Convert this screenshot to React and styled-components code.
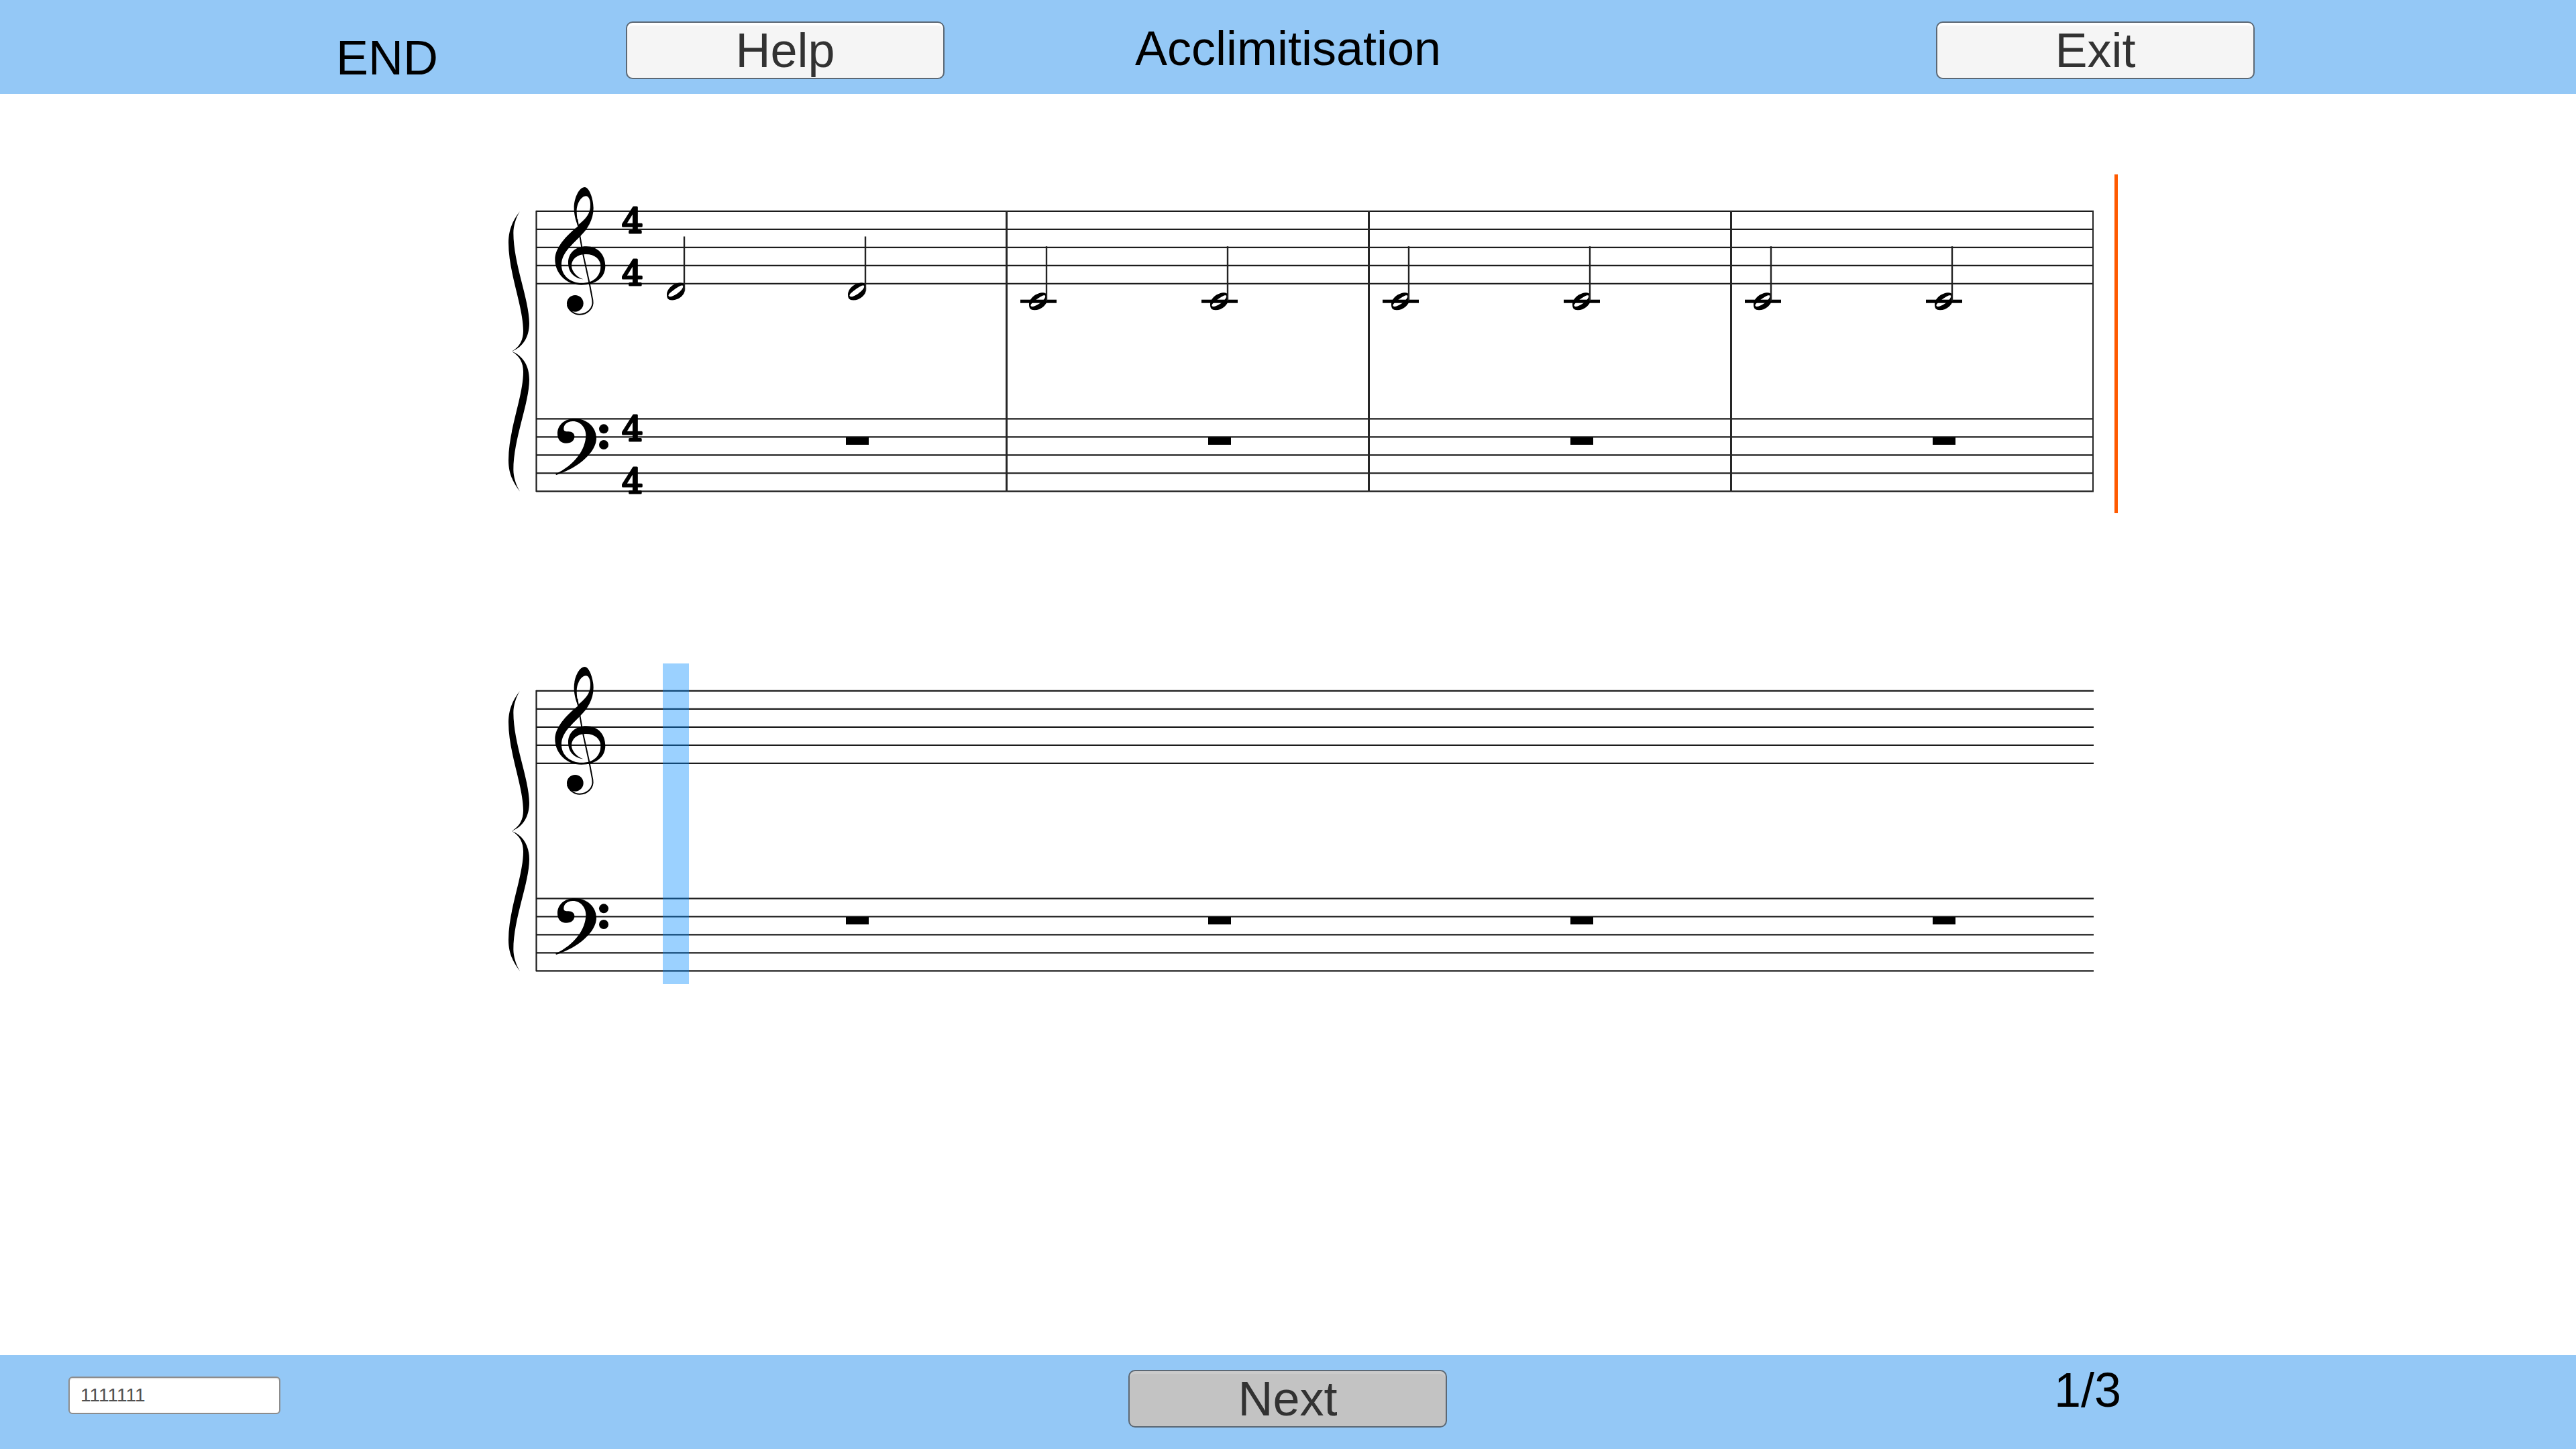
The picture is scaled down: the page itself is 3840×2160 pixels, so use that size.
import React from "react";
import styled, { createGlobalStyle } from "styled-components";

const GlobalStyle = createGlobalStyle`
  *, *::before, *::after { box-sizing: border-box; }
  body {
    margin: 0;
    background: #fff;
    color: #000;
    font-family: "Liberation Sans", Arial, sans-serif;
  }
`;

const Page = styled.div`
  min-height: 100vh;
  display: flex;
  flex-direction: column;
`;

const Bar = styled.div`
  display: grid;
  height: 140px;
  background: #94c8f6;
  font-size: 72px;
  line-height: 80px;
`;

const TopBar = styled(Bar).attrs({ as: "header" })`
  grid-template-columns: 501fr 432fr 475fr 1024fr 454fr 475fr 479fr;
  align-items: start;
  padding: 32px 0 14px;
`;

const BottomBar = styled(Bar).attrs({ as: "footer" })`
  grid-template-columns: 102fr 316fr 1264fr 475fr 905fr 778fr;
  align-items: center;
  padding: 12px 0 32px;
`;

const Status = styled.span`
  grid-column: 2;
  align-self: end;
`;

const Title = styled.h1`
  grid-column: 4;
  margin: 0;
  font-size: inherit;
  font-weight: 400;
  text-align: center;
`;

const Progress = styled.span`
  grid-column: 6;
  align-self: start;
`;

const Button = styled.button`
  grid-column: ${(p) => p.$column};
  align-self: ${(p) => p.$align || "start"};
  height: 86px;
  padding: 0;
  border: 2px solid #5c6874;
  border-radius: 10px;
  background: #f5f5f5;
  box-shadow: inset 0 4px 0 #fff;
  color: #323232;
  font: inherit;
  text-align: center;

  &:disabled {
    background: #c3c3c3;
    box-shadow: inset 0 4px 0 #cbcbcb;
  }
`;

const CodeInput = styled.input`
  grid-column: 2;
  width: 100%;
  height: 56px;
  padding: 0 16px;
  border: 2px solid #8c8c8c;
  border-radius: 6px;
  background: #fff;
  box-shadow: inset 0 2px 0 #e6e6e6;
  color: #505050;
  font: inherit;
  font-size: 28px;
  line-height: 32px;
`;

const Scores = styled.main`
  flex: 1;
  display: grid;
  grid-template-columns: 740fr 2440fr 660fr;
  align-content: start;
  row-gap: 205px;
  padding-top: 120px;
`;

const SystemSvg = styled.svg`
  grid-column: 2;
  display: block;
  width: 100%;
  height: auto;
`;

const TimeDigit = styled.text`
  font-family: "DejaVu Serif", serif;
  font-size: 50px;
  text-anchor: middle;
  stroke: #000;
  stroke-width: 3px;
  stroke-linejoin: round;
`;

const LEFT = 799;
const RIGHT = 3121;
const STEP = 27;
const TREBLE_TOP = 314.8;
const BASS_TOP = 624.4;
const BARLINES = [1500.5, 2040.5, 2580.5];
const RESTS = [1261, 1801, 2341, 2881];
const TIME_BASELINES = [347, 425, 657, 735];
const NOTES = [
  { x: 1020, y: 434.5 },
  { x: 1290, y: 434.5 },
  { x: 1560, y: 449.2, ledger: true },
  { x: 1830, y: 449.2, ledger: true },
  { x: 2100, y: 449.2, ledger: true },
  { x: 2370, y: 449.2, ledger: true },
  { x: 2640, y: 449.2, ledger: true },
  { x: 2910, y: 449.2, ledger: true },
];

function Staff({ top }) {
  return [0, 1, 2, 3, 4].map((i) => (
    <line
      key={i}
      x1={LEFT}
      x2={RIGHT}
      y1={top + i * STEP}
      y2={top + i * STEP}
      stroke="#1c1c1c"
      strokeWidth="2.2"
    />
  ));
}

const BRACE_HALF =
  "M105 165 C75 203 54 245 54 305 C54 440 120 590 120 700 C120 740 105 770 68 791.5 C120 772 147 725 147 665 C147 560 76 400 76 262 C76 230 88 192 105 165 Z";

/* Brace and clefs are drawn on a grid three times finer than the staff. */
function Brace() {
  return (
    <g transform="translate(740 260) scale(0.33333)">
      <path d={BRACE_HALF} />
      <path d={BRACE_HALF} transform="translate(0 1583) scale(1 -1)" />
    </g>
  );
}

function Clefs() {
  return (
    <g transform="translate(740 260) scale(0.33333)">
      <path
        fillRule="evenodd"
        d="M365 232 C352 200 347 175 347 150 C347 105 370 57 395 57 C415 57 434 110 434 150 C434 205 405 248 376 275 C330 322 291 355 291 405 C291 455 335 486 380 486 C435 486 466 455 466 410 C466 380 440 357 400 357 C360 357 336 380 336 408 C336 435 362 460 388 469 C350 464 321 440 321 395 C321 350 355 322 402 322 C455 322 487 360 487 410 C487 460 445 494 380 494 C310 494 262 440 262 380 C262 330 310 275 365 232 Z M366 226 C398 200 422 175 420 135 C420 115 413 97 400 97 C380 97 359 130 359 165 C359 190 363 208 366 226 Z"
      />
      <path
        fill="none"
        stroke="#000"
        strokeWidth="6"
        d="M361 200 L374 280 L386 350 L415 482 L430 562 C436 600 405 626 372 626 C350 626 324 610 318 585"
      />
      <circle cx="352" cy="577" r="37" />
      <path d="M264 1340 C350 1300 400 1230 400 1165 C400 1135 378 1104 342 1104 C315 1104 301 1120 301 1138 C301 1149 310 1150 322 1150 C340 1150 349 1160 349 1172 C349 1190 335 1202 311 1202 C290 1202 273 1188 273 1160 C273 1120 305 1092 350 1092 C405 1092 447 1130 447 1180 C447 1240 370 1312 268 1344 Z" />
      <circle cx="480" cy="1138" r="21" />
      <circle cx="480" cy="1209" r="21" />
    </g>
  );
}

function HalfNote({ x, y, ledger }) {
  return (
    <g transform={`translate(${x} ${y})`}>
      {ledger && <rect x="-39" y="-2.5" width="54" height="5" />}
      <path
        fillRule="evenodd"
        d="M-26 5 C-26 -5 -15 -13 -5 -13 C0 -13 1.5 -9 1 -3 C1 5 -8 13 -18 13 C-24 13 -26 10 -26 5 Z M-23.5 6.5 C-22 9 -17 7.5 -11 3.5 C-4 -1.5 -1 -6 -2 -8.5 C-3 -10 -8 -8 -14 -3.5 C-20 1 -24 4 -23.5 6.5 Z"
      />
      <path d="M0 -82 V-1" stroke="#222" strokeWidth="2.4" />
    </g>
  );
}

function System({ label, meter, children }) {
  return (
    <SystemSvg viewBox="740 260 2440 510" role="img" aria-label={label}>
      <Staff top={TREBLE_TOP} />
      <Staff top={BASS_TOP} />
      <line x1="799.5" x2="799.5" y1="314" y2="733" stroke="#1c1c1c" strokeWidth="2.2" />
      <Brace />
      <Clefs />
      {meter &&
        TIME_BASELINES.map((y) => (
          <TimeDigit key={y} x="943" y={y}>
            4
          </TimeDigit>
        ))}
      {RESTS.map((x) => (
        <rect key={x} x={x} y="652" width="34" height="11" />
      ))}
      {children}
    </SystemSvg>
  );
}

export default function App() {
  return (
    <Page>
      <GlobalStyle />
      <TopBar>
        <Status>END</Status>
        <Button type="button" $column={3}>Help</Button>
        <Title>Acclimitisation</Title>
        <Button type="button" $column={6}>Exit</Button>
      </TopBar>
      <Scores>
        <System label="Target phrase" meter>
          {BARLINES.map((x) => (
            <line key={x} x1={x} x2={x} y1="314" y2="733" stroke="#262626" strokeWidth="3" />
          ))}
          <line x1="3120" x2="3120" y1="314" y2="733" stroke="#262626" strokeWidth="2" />
          {NOTES.map((n) => (
            <HalfNote key={n.x} {...n} />
          ))}
          <rect x="3152" y="260" width="5" height="505" fill="#ff5a00" />
        </System>
        <System label="Played phrase">
          <rect x="988" y="274" width="39" height="478" fill="#008aff" fillOpacity="0.392" />
        </System>
      </Scores>
      <BottomBar>
        <CodeInput type="text" aria-label="Code" defaultValue="1111111" />
        <Button type="button" $column={4} $align="end" disabled>Next</Button>
        <Progress>1/3</Progress>
      </BottomBar>
    </Page>
  );
}
